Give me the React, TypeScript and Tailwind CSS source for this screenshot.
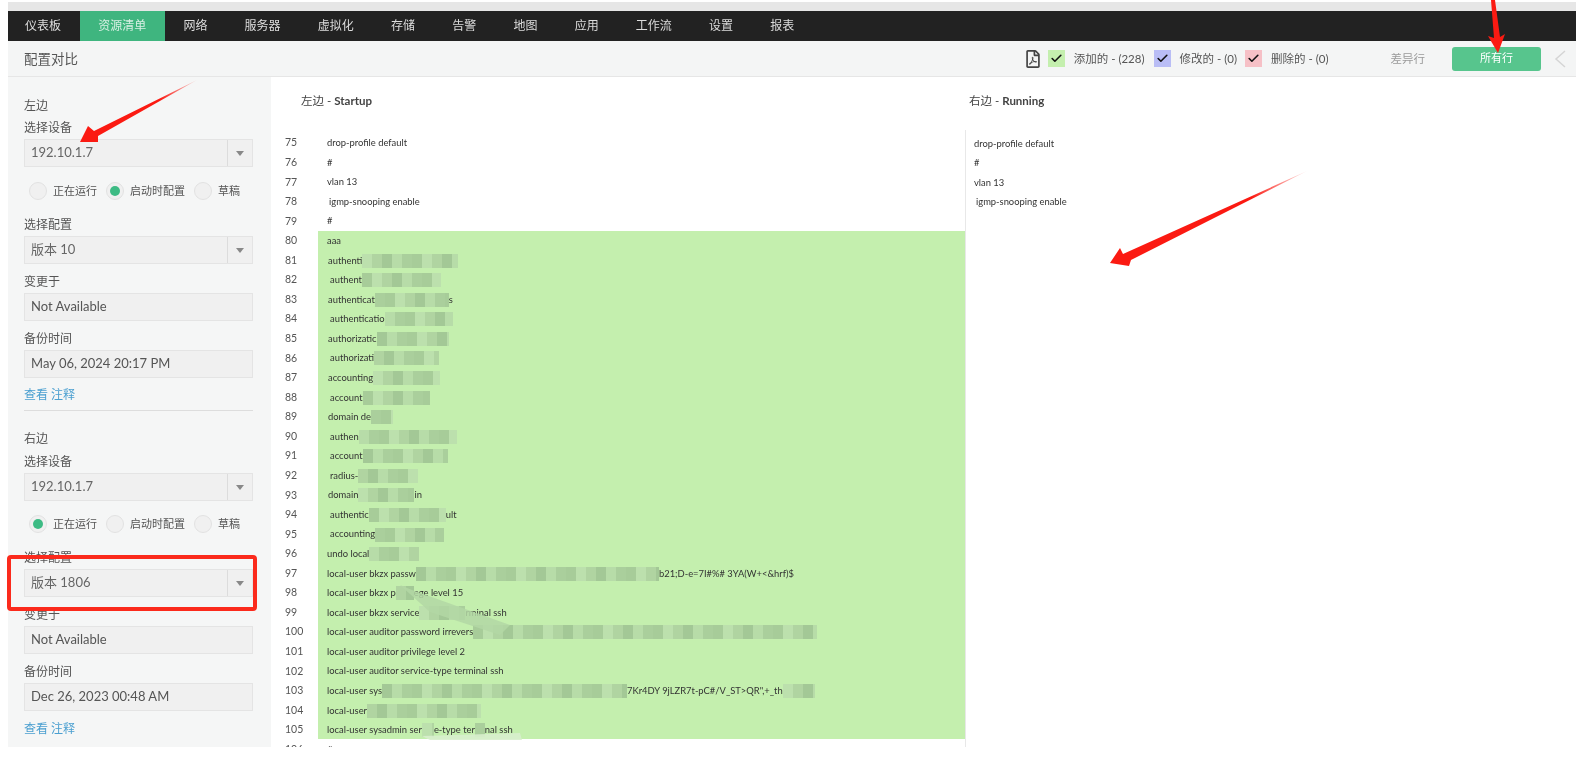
import { Check } from "lucide-react";
import { FaRegFilePdf } from "react-icons/fa";

const tabs = ["仪表板", "资源清单", "网络", "服务器", "虚拟化", "存储", "告警", "地图", "应用", "工作流", "设置", "报表"];

type Seg = string | number;
type Row = { n: number; i?: number; s: Seg[]; g?: boolean };

const rows: Row[] = [
  { n: 75, s: ["drop-profile default"] },
  { n: 76, s: ["#"] },
  { n: 77, s: ["vlan 13"] },
  { n: 78, i: 2, s: ["igmp-snooping enable"] },
  { n: 79, s: ["#"] },
  { n: 80, g: true, s: ["aaa"] },
  { n: 81, g: true, i: 1, s: ["authenti", 96] },
  { n: 82, g: true, i: 3, s: ["authent", 79] },
  { n: 83, g: true, i: 1, s: ["authenticat", 74, "s"] },
  { n: 84, g: true, i: 3, s: ["authenticatio", 68] },
  { n: 85, g: true, i: 1, s: ["authorizatic", 72] },
  { n: 86, g: true, i: 3, s: ["authorizati", 65] },
  { n: 87, g: true, i: 1, s: ["accounting", 67] },
  { n: 88, g: true, i: 3, s: ["account", 67] },
  { n: 89, g: true, i: 1, s: ["domain de", 22] },
  { n: 90, g: true, i: 3, s: ["authen", 98] },
  { n: 91, g: true, i: 3, s: ["account", 85] },
  { n: 92, g: true, i: 3, s: ["radius-", 60] },
  { n: 93, g: true, i: 1, s: ["domain", 56, "in"] },
  { n: 94, g: true, i: 3, s: ["authentic", 77, "ult"] },
  { n: 95, g: true, i: 3, s: ["accounting", 69] },
  { n: 96, g: true, s: ["undo local", 50] },
  { n: 97, g: true, s: ["local-user bkzx passw", 243, "b21;D-e=7I#%# 3YA(W+<&hrf)$"] },
  { n: 98, g: true, s: ["local-user bkzx p", 18, "ege level 15"] },
  { n: 99, g: true, s: ["local-user bkzx service", 46, "rminal ssh"] },
  { n: 100, g: true, s: ["local-user auditor password irrevers", 344] },
  { n: 101, g: true, s: ["local-user auditor privilege level 2"] },
  { n: 102, g: true, s: ["local-user auditor service-type terminal ssh"] },
  { n: 103, g: true, s: ["local-user sys", 245, "7Kr4DY 9jLZR7t-pC#/V_ST>QR\",+_th", 32] },
  { n: 104, g: true, s: ["local-user", 114] },
  { n: 105, g: true, s: ["local-user sysadmin ser", 12, "e-type ter", 10, "nal ssh"] },
  { n: 106, s: ["#"] },
];

const mosaic = ["bg-[#aacf9c]", "bg-[#b7dca8]", "bg-[#a3c896]", "bg-[#b0d4a1]", "bg-[#bce0ad]", "bg-[#a7cc99]"];

function Blur({ w, seed }: { w: number; seed: number }) {
  const cells = Math.ceil(w / 10);
  return (
    <span className="inline-flex h-[14px] overflow-hidden" style={{ width: w }}>
      {Array.from({ length: cells }).map((_, k) => (
        <span key={k} className={`h-full w-[10px] shrink-0 ${mosaic[(k * 5 + seed) % mosaic.length]}`} />
      ))}
    </span>
  );
}

function CodeRow({ r }: { r: Row }) {
  return (
    <div className="flex h-[19.57px] items-center">
      <div className="w-[47px] shrink-0 pl-[14px] pt-[1px] text-[10.5px] text-[#555]">{r.n}</div>
      <div className={`flex h-full flex-1 items-center pl-[9px] pt-[1px] ${r.g ? "bg-[#c4efae]" : ""}`}>
        <div className="flex items-center whitespace-pre text-[9.4px] text-[#333]" style={{ paddingLeft: r.i ?? 0 }}>
          {r.s.map((seg, k) =>
            typeof seg === "number" ? <Blur key={k} w={seg} seed={r.n + k} /> : <span key={k}>{seg}</span>
          )}
        </div>
      </div>
    </div>
  );
}

function Caret() {
  return (
    <svg width="8" height="5" viewBox="0 0 8 5">
      <path d="M0 0h8L4 5z" fill="#888" />
    </svg>
  );
}

function Label({ children }: { children: string }) {
  return <div className="h-[18px] text-[12px] leading-[18px] text-[#555]">{children}</div>;
}

function Select({ label, value }: { label: string; value: string }) {
  return (
    <div>
      <Label>{label}</Label>
      <div className="mt-[2px] flex h-[28px] w-[229px] items-center border border-[#e4e4e4] bg-[#f0f0f0]">
        <div className="flex-1 pl-[6px] text-[13px] text-[#666]">{value}</div>
        <div className="flex h-full w-[25px] items-center justify-center border-l border-[#dcdcdc]">
          <Caret />
        </div>
      </div>
    </div>
  );
}

function Field({ label, value }: { label: string; value: string }) {
  return (
    <div className="mt-[9px]">
      <Label>{label}</Label>
      <div className="mt-[2px] flex h-[28px] w-[229px] items-center border border-[#e4e4e4] bg-[#f0f0f0] pl-[6px] text-[13px] text-[#555]">
        {value}
      </div>
    </div>
  );
}

function Radio({ on, label }: { on?: boolean; label: string }) {
  return (
    <div className="flex items-center gap-[6px]">
      <span className="flex h-[18px] w-[18px] items-center justify-center rounded-full border border-[#e2e2e2] bg-[#f0f0f0]">
        {on && <span className="h-[10px] w-[10px] rounded-full bg-[#3dbb84]" />}
      </span>
      <span className="text-[11px] text-[#555]">{label}</span>
    </div>
  );
}

function Radios({ active }: { active: number }) {
  return (
    <div className="ml-[5px] flex h-[18px] items-center gap-[9px]">
      <Radio on={active === 0} label="正在运行" />
      <Radio on={active === 1} label="启动时配置" />
      <Radio on={active === 2} label="草稿" />
    </div>
  );
}

function Note() {
  return <div className="h-[18px] text-[12px] leading-[18px] text-[#4a9fd0]">查看 注释</div>;
}

function Legend({ box, label }: { box: string; label: string }) {
  return (
    <div className="flex items-center">
      <span className={`flex h-[17px] w-[17px] items-center justify-center ${box}`}>
        <Check size={13} strokeWidth={3} color="#111" />
      </span>
      <span className="ml-[9px] text-[11.5px] text-[#555]">{label}</span>
    </div>
  );
}

export default function App() {
  return (
    <div className="relative h-[757px] w-[1576px] overflow-hidden bg-white pl-[8px] blur-[0.4px] [font-family:Lato,'Noto_Sans_CJK_SC',sans-serif]">
      <div className="h-[2px]" />
      <div className="h-[9px] bg-[#e6e6e6]" />

      <nav className="flex h-[30px] bg-[#222222] text-[12px] text-[#dddddd]">
        {tabs.map((t, i) => (
          <div key={t} className={`flex items-center px-[18.6px] first:pl-[17px] ${i === 1 ? "bg-[#3fb57f] text-[#d7efe3]" : ""}`}>
            {t}
          </div>
        ))}
      </nav>

      <header className="flex h-[36px] items-center border-b border-[#e6e6e6] bg-[#f4f5f5] pl-[16px]">
        <div className="pt-[1px] text-[13.5px] text-[#555]">配置对比</div>
        <div className="ml-auto flex items-center">
          <FaRegFilePdf size={18} className="text-[#444]" />
          <div className="ml-[6px]"><Legend box="bg-[#c4efae]" label="添加的 - (228)" /></div>
          <div className="ml-[9px]"><Legend box="bg-[#b9bdf5]" label="修改的 - (0)" /></div>
          <div className="ml-[8px]"><Legend box="bg-[#f6c0c6]" label="删除的 - (0)" /></div>
          <div className="ml-[62px] text-[11.5px] text-[#999]">差异行</div>
          <div className="ml-[27px] flex h-[24px] w-[89px] items-center justify-center rounded-[3px] bg-[#57c58d] text-[11px] text-white">所有行</div>
          <svg className="ml-[12px] mr-[9px]" width="14" height="20" viewBox="0 0 14 20" fill="none">
            <path d="M12 2 3 10l9 8" stroke="#d5d5d5" strokeWidth="1.5" />
          </svg>
        </div>
      </header>

      <div className="flex h-[670px] overflow-hidden">
        <aside className="w-[263px] shrink-0 bg-[#f5f6f6] pl-[16px] pt-[20px]">
          <Label>左边</Label>
          <div className="mt-[4px]"><Select label="选择设备" value="192.10.1.7" /></div>
          <div className="mt-[15px]"><Radios active={1} /></div>
          <div className="mt-[16px]"><Select label="选择配置" value="版本 10" /></div>
          <Field label="变更于" value="Not Available" />
          <Field label="备份时间" value="May 06, 2024 20:17 PM" />
          <div className="mt-[8px]"><Note /></div>
          <div className="mt-[6px] h-px w-[229px] bg-[#dddddd]" />
          <div className="mt-[19px]"><Label>右边</Label></div>
          <div className="mt-[5px]"><Select label="选择设备" value="192.10.1.7" /></div>
          <div className="mt-[14px]"><Radios active={0} /></div>
          <div className="mt-[16px]"><Select label="选择配置" value="版本 1806" /></div>
          <Field label="变更于" value="Not Available" />
          <Field label="备份时间" value="Dec 26, 2023 00:48 AM" />
          <div className="mt-[9px]"><Note /></div>
        </aside>

        <section className="w-[694px] shrink-0">
          <div className="flex h-[56px] items-start pl-[30px] pt-[15px] text-[11.5px] text-[#444]">
            左边 - <span className="ml-[3px] font-bold">Startup</span>
          </div>
          {rows.map((r) => <CodeRow key={r.n} r={r} />)}
        </section>

        <section className="flex-1">
          <div className="flex h-[53px] items-start pl-[4px] pt-[15px] text-[11.5px] text-[#444]">
            右边 - <span className="ml-[3px] font-bold">Running</span>
          </div>
          <div className="h-full border-l border-[#e8e8e8] pl-[8px] pt-[4px] text-[9.4px] text-[#333]">
            <div className="flex h-[19.57px] items-center">drop-profile default</div>
            <div className="flex h-[19.57px] items-center">#</div>
            <div className="flex h-[19.57px] items-center">vlan 13</div>
            <div className="flex h-[19.57px] items-center pl-[2px]">igmp-snooping enable</div>
          </div>
        </section>
      </div>

      <div className="absolute left-[7px] top-[555px] h-[56px] w-[250px] rounded-[4px] border-4 border-[#fb2a1c]" />

      <svg className="pointer-events-none absolute left-0 top-0" width="1576" height="757" viewBox="0 0 1576 757">
        <defs>
          <linearGradient id="a1" x1="197" y1="80" x2="90" y2="135" gradientUnits="userSpaceOnUse">
            <stop offset="0" stopColor="#fb1a12" stopOpacity="0.15" />
            <stop offset="0.35" stopColor="#fb1a12" />
          </linearGradient>
          <linearGradient id="a2" x1="1307" y1="171" x2="1120" y2="258" gradientUnits="userSpaceOnUse">
            <stop offset="0" stopColor="#fb1a12" stopOpacity="0.1" />
            <stop offset="0.3" stopColor="#fb1a12" />
          </linearGradient>
        </defs>
        <polygon points="400,585 412,590 510,625 500,635 430,612" fill="#b3d7a4" opacity="0.85" />
        <polygon points="422,736 520,733 522,740 430,740" fill="#d8eecd" opacity="0.9" />
        <polygon points="80,142 88,126 94,131 197,80 98,136 98,142" fill="url(#a1)" />
        <polygon points="1110,263 1120,248 1123,254 1307,171 1131,260 1129,266" fill="url(#a2)" />
        <polygon points="1491,0 1495,0 1500,37 1505,34 1498,53 1488,36 1494,38" fill="#fb1a12" />
      </svg>
    </div>
  );
}
